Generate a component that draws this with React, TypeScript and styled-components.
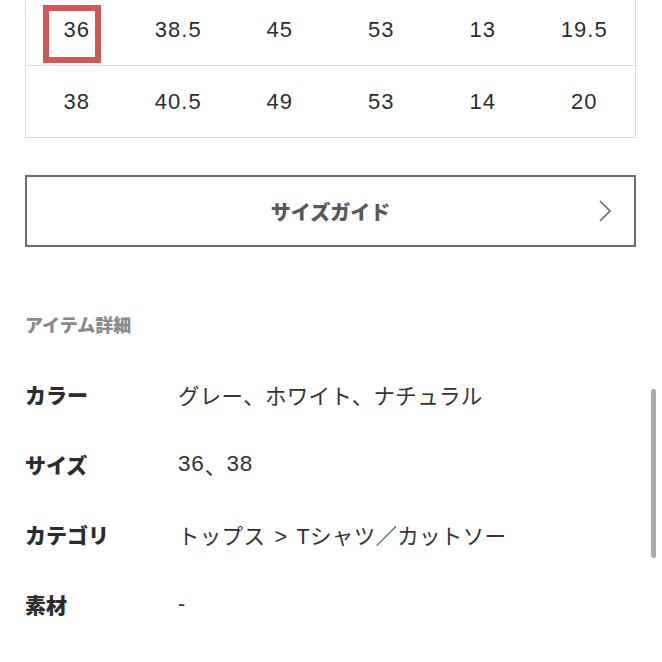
import React from "react";
import styled, { createGlobalStyle } from "styled-components";

const GlobalStyle = createGlobalStyle`
  html, body {
    margin: 0;
    padding: 0;
    background: #ffffff;
    overflow: hidden;
  }
  body {
    font-family: "Liberation Sans", "Noto Sans CJK JP", sans-serif;
    color: #333333;
  }
`;

const Page = styled.div`
  position: relative;
  width: 662px;
  height: 662px;
  overflow: hidden;
  background: #fff;
`;

const Content = styled.div`
  display: flex;
  flex-direction: column;
  padding: 0 26px 0 25px;
`;

const SizeTable = styled.div`
  margin-top: -6px;
  border: 1px solid #dedede;
  border-top: none;
  display: flex;
  flex-direction: column;
`;

const TableRow = styled.div<{ $last?: boolean }>`
  display: grid;
  grid-template-columns: repeat(6, 1fr);
  height: 71px;
  border-bottom: ${(p) => (p.$last ? "none" : "1px solid #dedede")};
`;

const Cell = styled.div`
  position: relative;
  display: flex;
  align-items: center;
  justify-content: center;
  font-family: "Liberation Sans", "Noto Sans CJK JP", sans-serif;
  font-size: 22px;
  letter-spacing: 1px;
  color: #2e2e2e;
`;

const Highlight = styled.span`
  position: absolute;
  left: 17px;
  top: 11px;
  width: 46px;
  height: 46px;
  border: 6px solid #d25656;
  pointer-events: none;
`;

const GuideButton = styled.button`
  margin-top: 37px;
  height: 72px;
  width: 100%;
  background: #fff;
  border: 2px solid #6e6e6e;
  display: grid;
  grid-template-columns: 1fr auto 1fr;
  align-items: center;
  padding: 0 22px;
  cursor: pointer;
`;

const GuideLabel = styled.span`
  grid-column: 2;
  font-family: "Noto Sans CJK JP", sans-serif;
  font-weight: 900;
  font-size: 20px;
  color: #595959;
`;

const Chevron = styled.svg`
  grid-column: 3;
  justify-self: end;
  width: 14px;
  height: 22px;
`;

const SectionTitle = styled.h3`
  margin: 65px 0 0 0;
  font-family: "Noto Sans CJK JP", sans-serif;
  font-weight: 900;
  font-size: 18px;
  line-height: 24px;
  color: #8a8a8a;
`;

const DetailList = styled.dl`
  margin: 43px 0 0 0;
  display: grid;
  grid-template-columns: 153px 1fr;
  grid-auto-rows: 70px;
`;

const Term = styled.dt`
  display: flex;
  align-items: center;
  height: 30px;
  font-family: "Noto Sans CJK JP", sans-serif;
  font-weight: 900;
  font-size: 21px;
  color: #2c2c2c;
`;

const Desc = styled.dd`
  margin: 0;
  display: flex;
  align-items: center;
  height: 30px;
  font-family: "Liberation Sans", "Noto Sans CJK JP", sans-serif;
  font-size: 21.5px;
  color: #333;
  letter-spacing: 0.3px;
  word-spacing: 3px;
`;

const Num = styled.span`
  font-size: 22.5px;
  letter-spacing: 0.8px;
`;

const ScrollThumb = styled.div`
  position: absolute;
  left: 651px;
  top: 389px;
  width: 5px;
  height: 169px;
  border-radius: 3px;
  background: #a9a9a9;
`;

const rows = [
  ["36", "38.5", "45", "53", "13", "19.5"],
  ["38", "40.5", "49", "53", "14", "20"],
];

const details: [string, React.ReactNode][] = [
  ["カラー", "グレー、ホワイト、ナチュラル"],
  [
    "サイズ",
    <>
      <Num>36</Num>、<Num>38</Num>
    </>,
  ],
  ["カテゴリ", "トップス > Tシャツ／カットソー"],
  ["素材", "-"],
];

export default function App() {
  return (
    <Page>
      <GlobalStyle />
      <Content>
        <SizeTable>
          {rows.map((r, i) => (
            <TableRow key={i} $last={i === rows.length - 1}>
              {r.map((v, j) => (
                <Cell key={j}>
                  {v}
                  {i === 0 && j === 0 && <Highlight />}
                </Cell>
              ))}
            </TableRow>
          ))}
        </SizeTable>

        <GuideButton>
          <GuideLabel>サイズガイド</GuideLabel>
          <Chevron viewBox="0 0 14 22">
            <polyline
              points="2,1 12,11 2,21"
              fill="none"
              stroke="#666"
              strokeWidth="1.6"
            />
          </Chevron>
        </GuideButton>

        <SectionTitle>アイテム詳細</SectionTitle>

        <DetailList>
          {details.map(([k, v]) => (
            <React.Fragment key={k}>
              <Term>{k}</Term>
              <Desc>{v}</Desc>
            </React.Fragment>
          ))}
        </DetailList>
      </Content>
      <ScrollThumb />
    </Page>
  );
}
